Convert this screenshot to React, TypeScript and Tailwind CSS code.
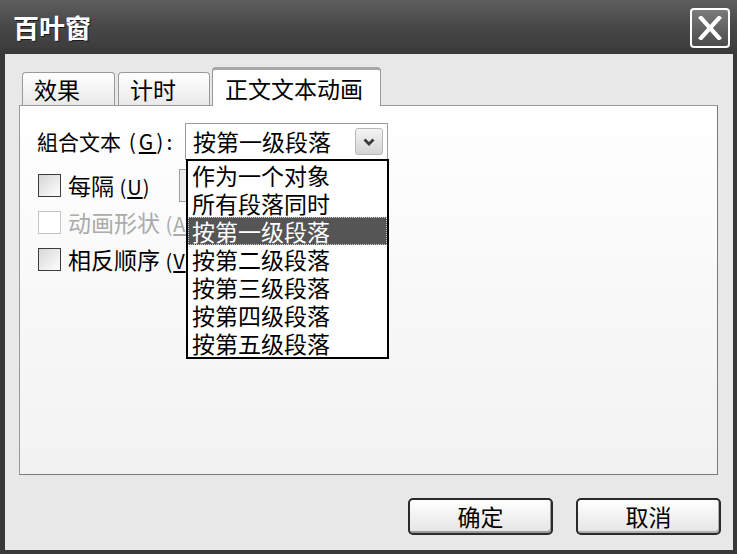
import React from "react";

const font = "font-['Noto_Sans_CJK_SC','Noto_Sans_CJK_JP',sans-serif]";

function Check({ disabled }: { disabled?: boolean }) {
  return (
    <div
      className={
        disabled
          ? "w-[23px] h-[23px] border border-[#c4c4c4] bg-white shrink-0"
          : "w-[23px] h-[23px] border border-[#3c3c3c] bg-linear-to-br from-[#d6d6d6] to-white shrink-0"
      }
    />
  );
}

function Key({ k }: { k: string }) {
  return (
    <span className="text-[20px] tracking-[1px]">
      {" "}(<span className="underline underline-offset-2">{k}</span>)
    </span>
  );
}

const items = [
  "作为一个对象",
  "所有段落同时",
  "按第一级段落",
  "按第二级段落",
  "按第三级段落",
  "按第四级段落",
  "按第五级段落",
];

export default function App() {
  return (
    <div className={`w-[737px] h-[554px] bg-[#383838] flex flex-col overflow-hidden ${font} text-black`}>
      {/* Title bar */}
      <div className="h-[54px] shrink-0 flex items-start justify-between pl-[13px] pr-[7px] bg-linear-to-b from-[#5e5e5e] via-[#474747] to-[#3a3a3a]">
        <div className="mt-[13px] text-[26px] leading-[28px] font-bold text-white [text-shadow:1px_1px_0_#1a1a1a]">
          百叶窗
        </div>
        <div className="mt-[8px] w-[40px] h-[40px] border-2 border-white rounded-[4px] bg-linear-to-b from-[#7a7a7a] to-[#4c4c4c] flex items-center justify-center">
          <svg width="26" height="24" viewBox="0 0 26 24">
            <path d="M4 2 L22 22 M22 2 L4 22" stroke="white" strokeWidth="4.2" strokeLinecap="square" />
          </svg>
        </div>
      </div>

      {/* Body */}
      <div className="flex-1 ml-[5px] mr-[4px] mb-[4px] bg-[#e8e8e8] flex flex-col pl-[14px] pt-[13px]">
        {/* Tabs */}
        <div className="h-[38px] flex items-end mr-[15px]">
          <div className="ml-[3px] w-[93px] h-[33px] border border-b-0 border-[#9a9a9a] rounded-t-[4px] bg-linear-to-b from-white to-[#e9e9e9] pl-[11px] flex items-center text-[23px] leading-none">
            效果
          </div>
          <div className="ml-[3px] w-[92px] h-[33px] border border-b-0 border-[#9a9a9a] rounded-t-[4px] bg-linear-to-b from-white to-[#e9e9e9] pl-[11px] flex items-center text-[23px] leading-none">
            计时
          </div>
          <div className="ml-[2px] w-[169px] h-[39px] -mb-[1px] relative z-10 border border-b-0 border-[#9a9a9a] border-t-[3px] border-t-[#a8a8a8] rounded-t-[4px] bg-white pl-[12px] flex items-center text-[23px] leading-none">
            正文文本动画
          </div>
        </div>

        {/* Panel */}
        <div className="h-[370px] mr-[15px] border border-[#9a9a9a] border-r-[#7a7a7a] border-b-[#7a7a7a] bg-linear-to-b from-white to-[#f2f2f2] pl-[17px] pt-[17px] flex flex-col">
          <div className="h-[37px] flex items-center">
            <div className="w-[148px] text-[21px] leading-none whitespace-nowrap">
              組合文本<span className="tracking-[3px]"> (<span className="underline underline-offset-2">G</span>):</span>
            </div>
            <div className="relative w-[203px] h-[37px] border border-[#9c9c9c] bg-white flex items-center pl-[7px] pr-[4px]">
              <div className="flex-1 text-[23px] leading-none">按第一级段落</div>
              <div className="w-[28px] h-[27px] rounded-[3px] border border-[#b8b8b8] bg-linear-to-b from-[#f4f4f4] to-[#d4d4d4] flex items-center justify-center">
                <svg width="14" height="10" viewBox="0 0 14 10">
                  <path d="M2.5 2.5 L7 7 L11.5 2.5" stroke="#3a3a3a" strokeWidth="2.8" fill="none" />
                </svg>
              </div>
              {/* Dropdown list */}
              <div className="absolute left-0 top-full w-[203px] border-2 border-black bg-white z-20 flex flex-col">
                {items.map((t, i) => (
                  <div
                    key={t}
                    className={
                      i === 2
                        ? "h-[28px] flex items-center pl-[4px] text-[23px] leading-none bg-[#555555] text-white outline-1 outline-dotted outline-[#cfcfcf] -outline-offset-1"
                        : "h-[28px] flex items-center pl-[4px] text-[23px] leading-none"
                    }
                  >
                    {t}
                  </div>
                ))}
              </div>
            </div>
          </div>

          <div className="mt-[7px] h-[37px] flex items-center">
            <div className="ml-[1px]">
              <Check />
            </div>
            <div className="ml-[7px] w-[111px] text-[23px] leading-none whitespace-nowrap">
              每隔<Key k="U" />
            </div>
            <div className="w-[100px] h-[33px] border border-[#a0a0a0] bg-[#ececec]" />
          </div>

          <div className="h-[37px] flex items-center">
            <div className="ml-[1px]">
              <Check disabled />
            </div>
            <div className="ml-[7px] text-[23px] leading-none whitespace-nowrap text-[#ababab]">
              动画形状<Key k="A" />
            </div>
          </div>

          <div className="h-[37px] flex items-center">
            <div className="ml-[1px]">
              <Check />
            </div>
            <div className="ml-[7px] text-[23px] leading-none whitespace-nowrap">
              相反顺序<Key k="V" />
            </div>
          </div>
        </div>

        {/* Buttons */}
        <div className="mt-[23px] flex justify-end gap-[23px] pr-[12px]">
          <div className="w-[145px] h-[37px] rounded-[5px] border-2 border-[#2a2a2a] bg-linear-to-b from-white to-[#e4e4e4] shadow-[inset_-1px_-2px_0_#9a9a9a] flex items-center justify-center text-[23px] leading-none">
            确定
          </div>
          <div className="w-[145px] h-[37px] rounded-[5px] border-2 border-[#2a2a2a] bg-linear-to-b from-white to-[#e4e4e4] shadow-[inset_-1px_-2px_0_#b0b0b0] flex items-center justify-center text-[23px] leading-none">
            取消
          </div>
        </div>
      </div>
    </div>
  );
}
